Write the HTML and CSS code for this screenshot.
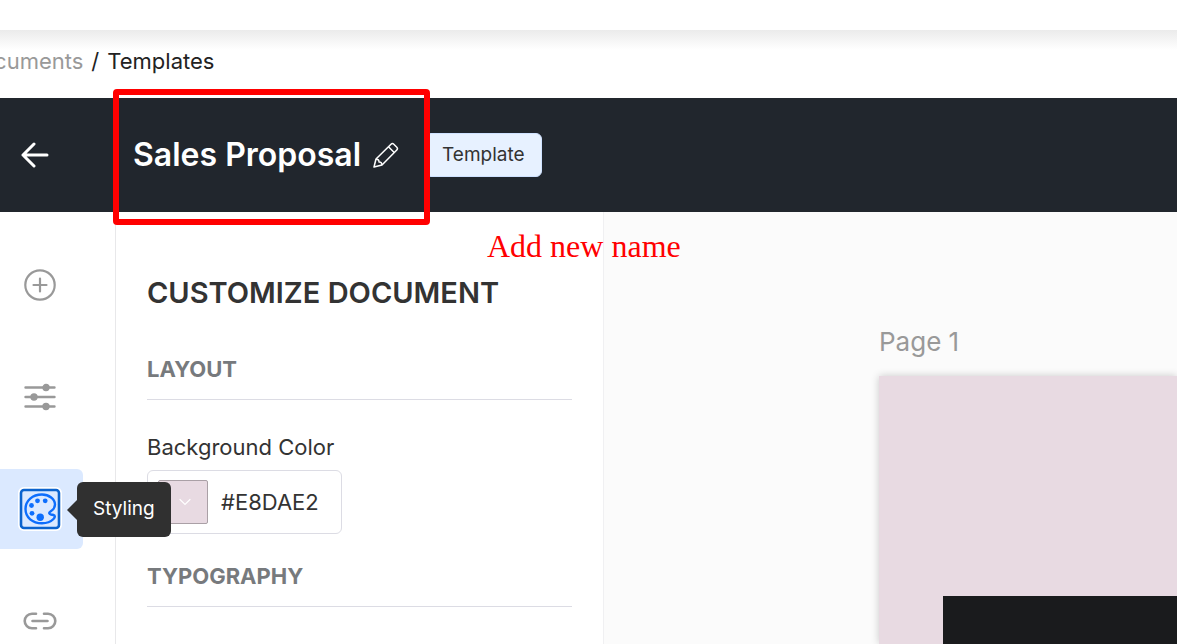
FILE: index.html
```
<!DOCTYPE html>
<html lang="en">

<head>
  <meta charset="UTF-8">
  <meta name="viewport" content="width=device-width, initial-scale=1.0">
  <title>Sales Proposal</title>
  <link rel="stylesheet" href="styles.css">
</head>

<body>
  <div class="topbar"></div>
  <nav class="breadcrumb">
    <a href="#">Documents</a>
    <span>/</span>
    <span>Templates</span>
  </nav>

  <header class="header">
    <button class="back" aria-label="Back">
      <svg width="28" height="26" viewBox="0 0 28 26" fill="none" stroke="#fff" stroke-width="3" stroke-linecap="round" stroke-linejoin="round">
        <path d="M13 2L2 13l11 11M2 13h24" />
      </svg>
    </button>
    <h1>Sales Proposal</h1>
    <button class="edit" aria-label="Edit name">
      <svg width="26" height="26" viewBox="0 0 26 26" fill="none" stroke="#fff" stroke-width="1.5" stroke-linejoin="round">
        <path d="M1 25l2-8L18 2.2q1.400-1.400 2.800 0l3 3q1.400 1.400 0 2.800L9 23z" />
        <path d="M15.500 4.700l6 6M3 17.300q3.200-.3 3 2.800 3-.2 3 2.900" />
      </svg>
    </button>
    <span class="badge">Template</span>
    <div class="highlight"></div>
    <p class="note">Add new name</p>
  </header>

  <div class="editor">
    <nav class="rail">
      <button class="rail-item" aria-label="Add">
        <svg width="32" height="32" viewBox="0 0 32 32" fill="none" stroke="#999" stroke-width="2.200" stroke-linecap="round">
          <circle cx="16" cy="16" r="14.700" />
          <path d="M16 9.500v13M9.500 16h13" />
        </svg>
      </button>
      <button class="rail-item" aria-label="Settings">
        <svg width="32" height="28" viewBox="0 0 32 28" fill="#999" stroke="#999" stroke-width="2.400" stroke-linecap="round">
          <path d="M1.500 4.500h29M1.500 14h29M1.500 23.500h29" />
          <circle cx="22" cy="4.500" r="2.500" />
          <circle cx="10" cy="14" r="2.500" />
          <circle cx="22" cy="23.500" r="2.500" />
        </svg>
      </button>
      <button class="rail-item active" aria-label="Styling">
        <svg width="44" height="44" viewBox="0 0 44 44" fill="none">
          <rect x="0" y="0" width="44" height="44" rx="6" fill="#fff" />
          <rect x="3" y="3" width="38" height="38" rx="3" fill="#dbe9ff" stroke="#0b63ce" stroke-width="2.600" />
          <path d="M24 7.500C31 7.500 37 12 37 17.500c0 4-2 5.500-4.500 7-2 1.200-1.500 2.500.5 3l2.500.5c2 .5 1.500 2.500 0 4-3 3-7 4.300-11.500 4.300C14.500 36.300 7.500 30.500 7.500 22S14.500 7.500 24 7.500z" stroke="#0d6efd" stroke-width="2.400" />
          <g fill="#0d6efd">
            <circle cx="19.500" cy="13.800" r="2.400" />
            <circle cx="27.200" cy="13.800" r="2.400" />
            <circle cx="13.500" cy="18.500" r="2.400" />
            <circle cx="14" cy="26.300" r="2.400" />
            <circle cx="22.200" cy="30.300" r="3.700" />
          </g>
        </svg>
        <span class="tooltip">Styling</span>
      </button>
      <button class="rail-item" aria-label="Links">
        <svg width="34" height="18" viewBox="0 0 34 18" fill="none" stroke="#999" stroke-width="2.600" stroke-linecap="round">
          <path d="M13 1.700H9a7.300 7.300 0 0 0 0 14.600h4M21 1.700h4a7.300 7.300 0 0 1 0 14.600h-4M9.500 9h15" />
        </svg>
      </button>
    </nav>

    <section class="panel">
      <h2>CUSTOMIZE DOCUMENT</h2>
      <h3>LAYOUT</h3>
      <label for="bg-color">Background Color</label>
      <div class="color-field">
        <button class="swatch" aria-label="Pick a color">
          <svg width="12" height="8" viewBox="0 0 12 8" fill="none" stroke="#fff" stroke-width="1.200" stroke-linecap="round">
            <path d="M1 1.500l5 5 5-5" />
          </svg>
        </button>
        <input type="text" id="bg-color" value="#E8DAE2">
      </div>
      <h3>TYPOGRAPHY</h3>
    </section>

    <main class="canvas">
      <p class="page-label">Page 1</p>
      <div class="page">
        <div class="page-block"></div>
      </div>
    </main>
  </div>
</body>

</html>
```
FILE: styles.css
```
:root {
  --dark: #21262d;
  --text: #333;
  --grey: #999;
  --line: #dcdce4;
  --red: #f00;
  --page: #e8dae2;
}

* {
  box-sizing: border-box;
}

body {
  display: flex;
  flex-direction: column;
  height: 100vh;
  margin: 0;
  overflow: hidden;
  background-color: #fff;
  color: var(--text);
  font-family: Inter, sans-serif;
  font-size: 22px;
}

h1,
h2,
h3,
p {
  margin: 0;
}

button {
  padding: 0;
  border: 0;
  background: none;
  color: inherit;
  font: inherit;
}

svg {
  display: block;
}

.topbar {
  flex: none;
  height: 30px;
}

.breadcrumb {
  display: flex;
  flex: none;
  gap: 8px;
  padding: 17px 0 23px;
  margin-left: -35px;
  background: linear-gradient(#ebebeb, #fff 20px);
  color: #222;
  line-height: 28px;
}

.breadcrumb a {
  color: var(--grey);
  text-decoration: none;
}

.header {
  position: relative;
  display: flex;
  flex: none;
  align-items: center;
  height: 114px;
  padding-left: 21px;
  background-color: var(--dark);
}

.back {
  width: 112px;
}

h1 {
  color: #fff;
  font-size: 32px;
  font-weight: 600;
  line-height: 40px;
}

.edit {
  margin-left: 12px;
}

.badge {
  margin-left: 26px;
  padding: 7px 16px;
  border: 1px solid #cfe2ff;
  border-radius: 6px;
  background-color: #e7f1ff;
  font-size: 19px;
  line-height: 28px;
}

/* red marker drawn over the header */
.highlight {
  position: absolute;
  top: -9px;
  left: 113px;
  width: 317px;
  height: 136px;
  border: 6px solid var(--red);
  border-radius: 4px;
}

.note {
  position: absolute;
  top: 130px;
  left: 487px;
  z-index: 1;
  color: var(--red);
  font-family: "Liberation Serif", serif;
  font-size: 32px;
  line-height: 36px;
}

.editor {
  display: flex;
  flex: 1;
  min-height: 0;
}

.rail {
  display: flex;
  flex: none;
  flex-direction: column;
  gap: 32px;
  width: 116px;
  padding-top: 33px;
  border-right: 1px solid #e8e8ea;
}

.rail-item {
  position: relative;
  display: flex;
  flex: none;
  align-items: center;
  justify-content: center;
  width: 83px;
  height: 80px;
  padding-right: 4px;
}

.rail-item.active {
  border-radius: 0 6px 6px 0;
  background-color: #dbe9ff;
}

.tooltip {
  position: absolute;
  top: 13px;
  left: 77px;
  z-index: 1;
  padding: 13px 16px 14px;
  border-radius: 6px;
  background-color: #303030;
  color: #fff;
  font-size: 19px;
  line-height: 28px;
}

.tooltip::before {
  position: absolute;
  top: 18px;
  left: -10px;
  border: 10px solid transparent;
  border-left: 0;
  border-right-color: #303030;
  content: '';
}

.panel {
  flex: none;
  width: 488px;
  padding: 63px 31px 0;
  border-right: 1px solid #f0f0f2;
}

h2 {
  margin-bottom: 44px;
  font-size: 29px;
  font-weight: 600;
  line-height: 36px;
}

h3 {
  padding-bottom: 16px;
  margin-bottom: 33px;
  border-bottom: 1px solid var(--line);
  color: #777a7d;
  font-size: 22px;
  font-weight: 700;
  line-height: 28px;
}

label {
  display: block;
  margin-bottom: 9px;
  line-height: 28px;
}

.color-field {
  display: flex;
  align-items: center;
  width: 195px;
  height: 64px;
  padding-left: 10px;
  margin-bottom: 28px;
  border: 1px solid var(--line);
  border-radius: 6px;
}

.swatch {
  display: flex;
  flex: none;
  align-items: center;
  justify-content: center;
  width: 50px;
  height: 44px;
  padding-left: 4px;
  border: 1px solid #aaa0a6;
  border-radius: 2px;
  background-color: var(--page);
}

input {
  flex: 1;
  min-width: 0;
  padding: 0 0 0 13px;
  border: 0;
  outline: 0;
  background: none;
  color: var(--text);
  font: inherit;
}

.canvas {
  display: flex;
  flex: 1;
  flex-direction: column;
  min-width: 0;
  padding: 112px 0 0 275px;
  background-color: #fbfbfb;
}

.page-label {
  margin-bottom: 16px;
  color: var(--grey);
  font-size: 26px;
  line-height: 36px;
}

.page {
  display: flex;
  flex: 1;
  padding: 220px 0 0 64px;
  background-color: var(--page);
  box-shadow: 0 0 8px rgba(0, 0, 0, 0.2);
}

.page-block {
  flex: 1;
  background-color: #1a1b1d;
}
```
